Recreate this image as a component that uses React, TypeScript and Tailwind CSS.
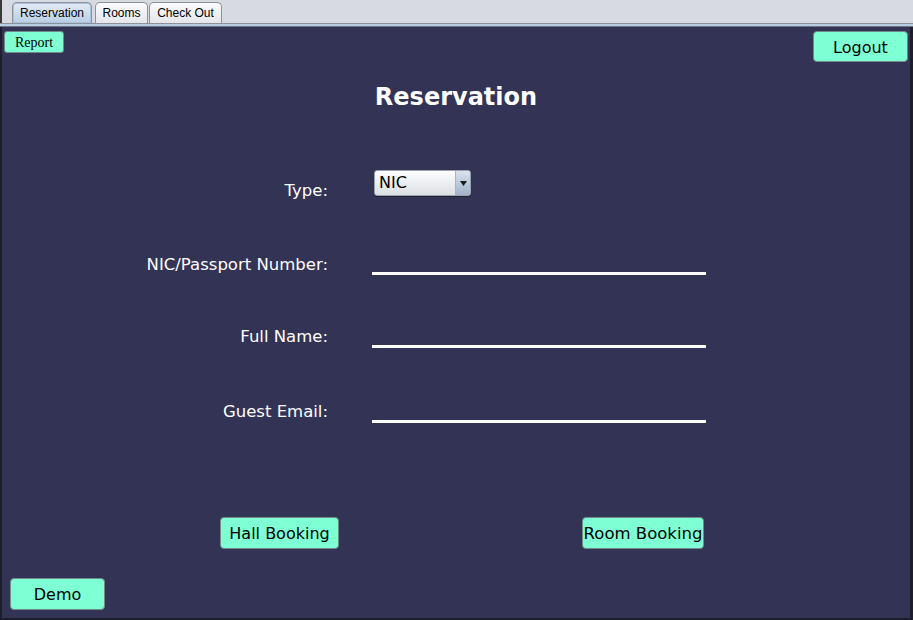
import React from "react";

const sans = { fontFamily: '"DejaVu Sans", Verdana, sans-serif' };

const AquaButton = ({ label, className }: { label: string; className: string }) => (
  <button
    className={`flex items-center justify-center rounded-[4px] border border-[#6f8c86] bg-[#7fffd4] pt-[2px] text-black ${className}`}
    style={sans}
  >
    {label}
  </button>
);

const Tab = ({ label, active, className }: { label: string; active?: boolean; className: string }) => (
  <div
    className={`flex h-[21px] items-center justify-center rounded-t-[5px] border border-b-0 border-[#8d9199] text-[12px] text-black ${
      active ? "bg-gradient-to-b from-[#e3ecf6] to-[#b9cde3] shadow-[inset_0_0_0_1px_#a9c3df]" : "bg-gradient-to-b from-[#fbfbfc] to-[#e4e6ea]"
    } ${className}`}
    style={{ fontFamily: '"Liberation Sans", Arial, sans-serif' }}
  >
    {label}
  </div>
);

const FieldRow = ({ label, lineTop }: { label: string; lineTop: string }) => (
  <div className="flex items-start">
    <div className="w-[326px] text-right text-[16.5px] leading-[20px] text-white" style={sans}>
      {label}
    </div>
    <div className={`ml-[44px] h-[3px] w-[334px] bg-white ${lineTop}`} />
  </div>
);

export default function App() {
  return (
    <div className="flex h-[620px] w-[913px] flex-col bg-[#d7dae0]">
      {/* tab strip */}
      <div className="flex h-[23px] items-end border-l-2 border-[#3a3a3a] pl-[10px]">
        <Tab label="Reservation" active className="w-[80px]" />
        <Tab label="Rooms" className="ml-[3px] w-[53px]" />
        <Tab label="Check Out" className="ml-[1px] w-[73px]" />
      </div>
      <div className="h-[1px] bg-[#8d9199]" />
      <div className="h-[2px] bg-[#b9cde3]" />
      <div className="h-[1px] bg-[#6f7580]" />

      {/* content panel */}
      <div className="flex flex-1 flex-col border-b-2 border-l-2 border-r-[3px] border-[#1f1f2c] bg-[#333356]">
        <div className="flex items-start justify-between px-[2px] pt-[4px]">
          <button
            className="flex h-[22px] w-[60px] items-center justify-center rounded-[3px] border border-[#6f8c86] bg-[#7fffd4] text-[14px] text-black"
            style={{ fontFamily: '"Liberation Serif", "Times New Roman", serif' }}
          >
            Report
          </button>
          <AquaButton label="Logout" className="h-[31px] w-[95px] text-[16px]" />
        </div>

        <h1
          className="mt-[20px] text-center text-[24px] font-bold leading-[30px] text-white"
          style={sans}
        >
          Reservation
        </h1>

        {/* form */}
        <div className="mt-[58px] flex items-start">
          <div className="w-[326px] pt-[11px] text-right text-[16.5px] leading-[20px] text-white" style={sans}>
            Type:
          </div>
          <div className="ml-[46px] flex h-[26px] w-[97px] items-stretch overflow-hidden rounded-[3px] border border-[#9aa3ad] bg-gradient-to-b from-[#fdfdfe] to-[#dcdfe4] shadow-[0_1px_1px_#1f1f30]">
            <div className="flex flex-1 items-center pl-[4px] text-[16px] text-black" style={sans}>
              NIC
            </div>
            <div className="flex w-[15px] items-center justify-center border-l border-[#a7b4c2] bg-gradient-to-b from-[#d9e3ee] to-[#9fb3c8]">
              <svg width="7" height="5" viewBox="0 0 7 5">
                <path d="M0 0h7L3.5 5z" fill="#1a1a1a" />
              </svg>
            </div>
          </div>
        </div>

        <div className="mt-[54px]">
          <FieldRow label="NIC/Passport Number:" lineTop="mt-[17px]" />
        </div>
        <div className="mt-[52px]">
          <FieldRow label="Full Name:" lineTop="mt-[18px]" />
        </div>
        <div className="mt-[54px]">
          <FieldRow label="Guest Email:" lineTop="mt-[18px]" />
        </div>

        <div className="mt-[94px] flex">
          <AquaButton label="Hall Booking" className="ml-[218px] h-[32px] w-[119px] text-[16px]" />
          <AquaButton label="Room Booking" className="ml-[243px] h-[32px] w-[122px] text-[16.5px]" />
        </div>

        <div className="mt-[29px] flex">
          <AquaButton label="Demo" className="ml-[8px] h-[32px] w-[95px] text-[16px]" />
        </div>
      </div>
    </div>
  );
}
